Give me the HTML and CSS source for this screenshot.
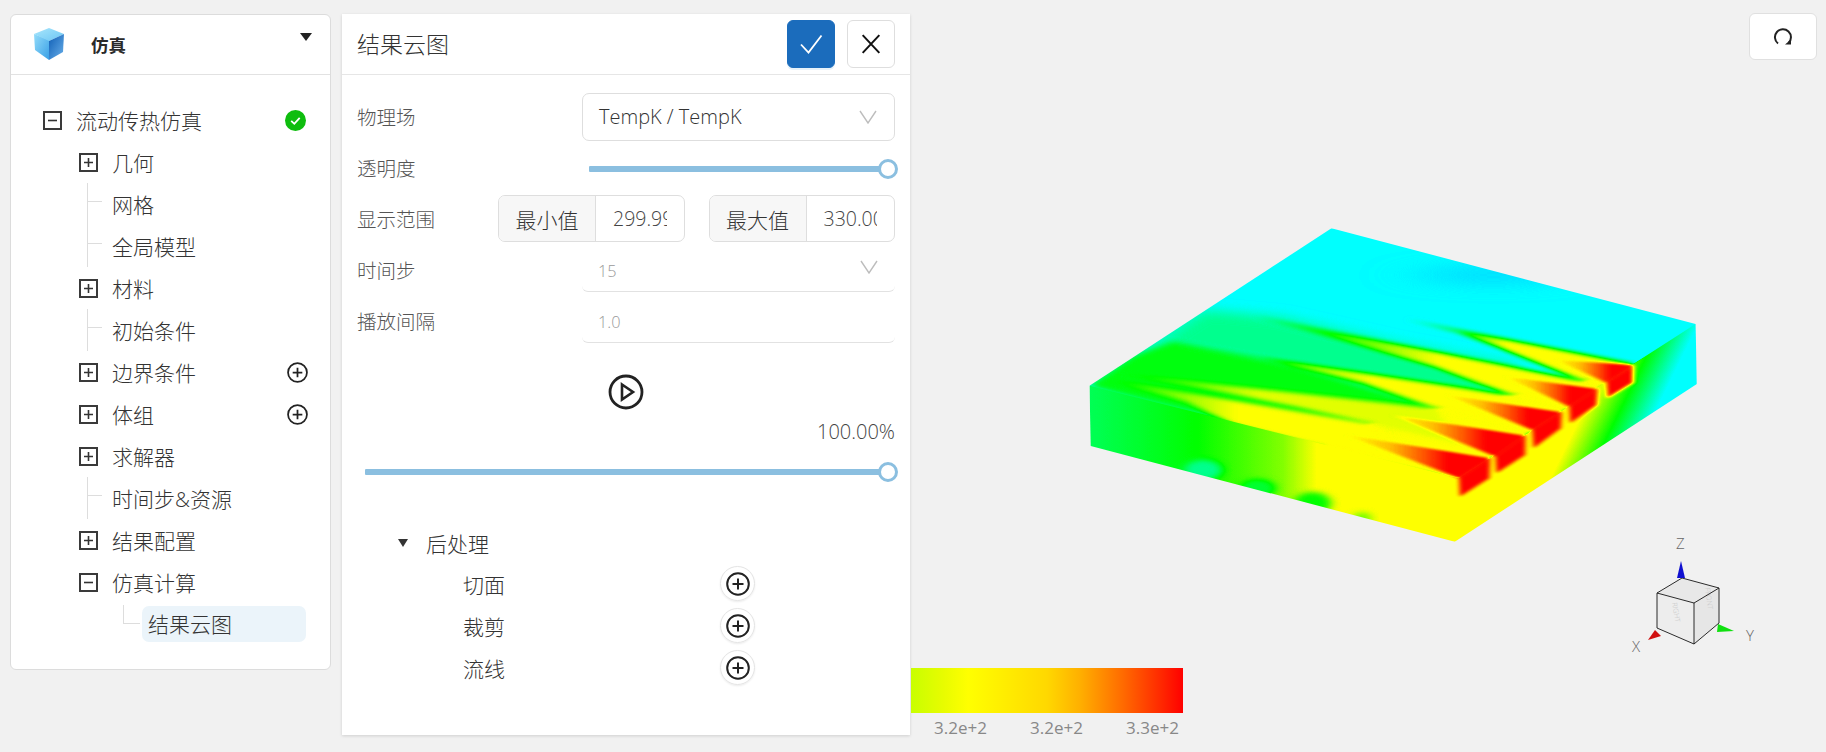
FILE: index.html
```html
<!DOCTYPE html>
<html lang="zh-CN">
<head>
<meta charset="utf-8">
<title>结果云图</title>
<link rel="stylesheet" href="styles.css">
</head>
<body>
<svg class="defs" width="0" height="0" aria-hidden="true">
  <defs>
    <symbol id="i-plus" viewBox="0 0 19 19"><rect x="1" y="1" width="17" height="17" fill="none" stroke="#3a3a3a" stroke-width="2"/><path d="M5 9.500h9M9.500 5v9" stroke="#333" stroke-width="1.600"/></symbol>
    <symbol id="i-minus" viewBox="0 0 19 19"><rect x="1" y="1" width="17" height="17" fill="none" stroke="#3a3a3a" stroke-width="2"/><path d="M5 9.500h9" stroke="#333" stroke-width="1.600"/></symbol>
    <symbol id="i-add" viewBox="0 0 24 24"><circle cx="12" cy="12" r="10.800" fill="none" stroke="#222" stroke-width="2"/><path d="M6.500 12h11M12 6.500v11" stroke="#222" stroke-width="2"/></symbol>
    <symbol id="i-chev" viewBox="0 0 18 14"><path d="M1 1l8 12 8-12" fill="none" stroke="#bdbdbd" stroke-width="1.400"/></symbol>
    <linearGradient id="cubeL" x1="0" y1="0" x2="1" y2="1"><stop offset="0" stop-color="#93dcfa"/><stop offset="1" stop-color="#3aa0e6"/></linearGradient>
    <linearGradient id="cubeT" x1="0" y1="0" x2="1" y2="1"><stop offset="0" stop-color="#a8e6fc"/><stop offset="1" stop-color="#6cc6f4"/></linearGradient>
    <linearGradient id="cubeR" x1="0" y1="0" x2="1" y2="1"><stop offset="0" stop-color="#0f5fb6"/><stop offset="1" stop-color="#6ab0ea"/></linearGradient>

    <linearGradient id="wake1" gradientUnits="userSpaceOnUse" x1="820" y1="0" x2="1060" y2="0"><stop offset="0" stop-color="#616161"/><stop offset=".55" stop-color="#8c8c8c"/><stop offset="1" stop-color="#bfbfbf"/></linearGradient>
    <linearGradient id="wake2" gradientUnits="userSpaceOnUse" x1="440" y1="0" x2="900" y2="0"><stop offset="0" stop-color="#5c5c5c"/><stop offset=".56" stop-color="#949494"/><stop offset="1" stop-color="#bfbfbf"/></linearGradient>
    <linearGradient id="wake3" gradientUnits="userSpaceOnUse" x1="260" y1="0" x2="740" y2="0"><stop offset="0" stop-color="#737373"/><stop offset=".54" stop-color="#9e9e9e"/><stop offset="1" stop-color="#bfbfbf"/></linearGradient>
    <linearGradient id="wake4" gradientUnits="userSpaceOnUse" x1="130" y1="0" x2="470" y2="0"><stop offset="0" stop-color="#7a7a7a"/><stop offset=".5" stop-color="#999"/><stop offset="1" stop-color="#b8b8b8"/></linearGradient>
    <linearGradient id="wake5" gradientUnits="userSpaceOnUse" x1="120" y1="0" x2="420" y2="0"><stop offset="0" stop-color="#808080"/><stop offset=".45" stop-color="#9c9c9c"/><stop offset="1" stop-color="#bfbfbf"/></linearGradient>
    <linearGradient id="flame" x1="0" y1="0" x2="1" y2="0"><stop offset="0" stop-color="#bfbfbf"/><stop offset=".3" stop-color="#cfcfcf"/><stop offset=".55" stop-color="#ebebeb"/><stop offset=".7" stop-color="#fff"/></linearGradient>
    <linearGradient id="leftFace" gradientUnits="userSpaceOnUse" x1="70" y1="0" x2="610" y2="0"><stop offset="0" stop-color="#6a6a6a"/><stop offset=".48" stop-color="#808080"/><stop offset=".85" stop-color="#a0a0a0"/><stop offset="1" stop-color="#bfbfbf"/></linearGradient>
    <linearGradient id="rightFace" gradientUnits="userSpaceOnUse" x1="1225" y1="650" x2="1375" y2="708"><stop offset="0" stop-color="#bfbfbf"/><stop offset=".5" stop-color="#808080"/><stop offset="1" stop-color="#404040"/></linearGradient>

    <filter id="b2" color-interpolation-filters="sRGB" x="-20%" y="-30%" width="140%" height="160%"><feGaussianBlur stdDeviation="6 3"/></filter>
    <filter id="b4" color-interpolation-filters="sRGB" x="-20%" y="-30%" width="140%" height="160%"><feGaussianBlur stdDeviation="8 6"/></filter>
    <filter id="b8" color-interpolation-filters="sRGB" x="-40%" y="-40%" width="180%" height="180%"><feGaussianBlur stdDeviation="11 8"/></filter>
    <filter id="b16" color-interpolation-filters="sRGB" x="-30%" y="-30%" width="160%" height="160%"><feGaussianBlur stdDeviation="24 18"/></filter>
    <filter id="b30" color-interpolation-filters="sRGB" x="-50%" y="-100%" width="200%" height="300%"><feGaussianBlur stdDeviation="60 24"/></filter>
    <filter id="jet" color-interpolation-filters="sRGB" filterUnits="userSpaceOnUse" x="0" y="0" width="1568" height="1050">
      <feComponentTransfer>
        <feFuncR type="table" tableValues="0 0 0 1 1"/>
        <feFuncG type="table" tableValues="0 1 1 1 0"/>
        <feFuncB type="table" tableValues="1 1 0 0 0"/>
      </feComponentTransfer>
    </filter>
    <clipPath id="solid"><polygon points="645,55 1510,342 1513,522 938,995 73,708 70,527"/></clipPath>
  </defs>
</svg>

<main class="app">
  <aside class="nav-panel">
    <header class="nav-head">
      <svg class="logo" viewBox="0 0 32 33">
        <polygon points="0,6 15,12 15,32 1,22" fill="url(#cubeL)"/>
        <polygon points="15,0 30,6 15,13 0,6" fill="url(#cubeT)"/>
        <polygon points="15,13 30,6 29,24 15,32" fill="url(#cubeR)"/>
      </svg>
      <span class="nav-title">仿真</span>
      <span class="nav-caret"></span>
    </header>
    <div class="tree">
      <div class="row root"><svg class="toggle"><use href="#i-minus"/></svg><span>流动传热仿真</span>
        <svg class="status" viewBox="0 0 21 21"><circle cx="10.500" cy="10.500" r="10.500" fill="#0ebd0e"/><path d="M6.200 10.800l3.100 3 5.400-6" fill="none" stroke="#fff" stroke-width="1.800"/></svg></div>
      <div class="row"><svg class="toggle"><use href="#i-plus"/></svg><span>几何</span></div>
      <div class="row leaf"><span>网格</span></div>
      <div class="row leaf"><span>全局模型</span></div>
      <div class="row"><svg class="toggle"><use href="#i-plus"/></svg><span>材料</span></div>
      <div class="row leaf"><span>初始条件</span></div>
      <div class="row"><svg class="toggle"><use href="#i-plus"/></svg><span>边界条件</span><svg class="add"><use href="#i-add"/></svg></div>
      <div class="row"><svg class="toggle"><use href="#i-plus"/></svg><span>体组</span><svg class="add"><use href="#i-add"/></svg></div>
      <div class="row"><svg class="toggle"><use href="#i-plus"/></svg><span>求解器</span></div>
      <div class="row leaf"><span>时间步&amp;资源</span></div>
      <div class="row"><svg class="toggle"><use href="#i-plus"/></svg><span>结果配置</span></div>
      <div class="row"><svg class="toggle"><use href="#i-minus"/></svg><span>仿真计算</span></div>
      <div class="row sub"><span class="selected">结果云图</span></div>
    </div>
  </aside>

  <section class="form-panel">
    <header class="form-head">
      <h1 class="form-title">结果云图</h1>
      <button class="btn primary"><svg viewBox="0 0 24 20"><path d="M2 10.500l7.500 8L22.500 1.500" fill="none" stroke="#fff" stroke-width="1.800"/></svg></button>
      <button class="btn"><svg viewBox="0 0 18 18"><path d="M1.500 1l15 16M16.500 1l-15 16" fill="none" stroke="#111" stroke-width="1.800"/></svg></button>
    </header>
    <div class="form-body">
      <div class="f-row">
        <label class="f-label">物理场</label>
        <div class="select"><span>TempK / TempK</span><svg class="chev"><use href="#i-chev"/></svg></div>
      </div>
      <div class="f-row">
        <label class="f-label">透明度</label>
        <div class="f-grow"><div class="slider"><i class="knob"></i></div></div>
      </div>
      <div class="f-row">
        <label class="f-label short">显示范围</label>
        <div class="range">
          <div class="group"><span class="addon">最小值</span><span class="val"><span>299.99</span></span></div>
          <div class="group"><span class="addon">最大值</span><span class="val"><span>330.00</span></span></div>
        </div>
      </div>
      <div class="f-row">
        <label class="f-label">时间步</label>
        <div class="underline"><span>15</span><svg class="chev up"><use href="#i-chev"/></svg></div>
      </div>
      <div class="f-row">
        <label class="f-label">播放间隔</label>
        <div class="underline"><span>1.0</span></div>
      </div>
      <div class="play">
        <svg viewBox="0 0 36 36"><circle cx="18" cy="18" r="16" fill="none" stroke="#222" stroke-width="2.800"/><path d="M14 10.500l11 7.500-11 7.500z" fill="none" stroke="#222" stroke-width="2.600"/></svg>
      </div>
      <div class="percent">100.00%</div>
      <div class="slider wide"><i class="knob"></i></div>
      <div class="post">
        <div class="post-head"><i class="post-caret"></i><span>后处理</span></div>
        <div class="post-row"><span>切面</span><b class="add-ring"><svg><use href="#i-add"/></svg></b></div>
        <div class="post-row"><span>裁剪</span><b class="add-ring"><svg><use href="#i-add"/></svg></b></div>
        <div class="post-row"><span>流线</span><b class="add-ring"><svg><use href="#i-add"/></svg></b></div>
      </div>
    </div>
  </section>
</main>

<svg class="model" viewBox="0 0 1568 1050" preserveAspectRatio="none">
  <g clip-path="url(#solid)">
    <g filter="url(#jet)">
      <rect width="1568" height="1050" fill="#404040"/>
      <ellipse cx="1030" cy="195" rx="190" ry="30" fill="#383838" filter="url(#b30)"/>
      <polygon points="70,527 340,300 520,320 800,400 1100,470 800,700 300,640" fill="#5c5c5c" filter="url(#b16)"/>
      <polygon points="70,527 170,440 270,395 560,470 900,600 948,805" fill="#7c7c7c" filter="url(#b8)"/>
      <polygon points="1240,512 1362,462 1362,470 948,805 620,710 735,640 890,595 1070,555" fill="#bfbfbf" filter="url(#b2)"/>
      <polygon points="820,328 1362,462 1290,520 1240,512 1040,412 940,365" fill="url(#wake1)" filter="url(#b4)"/>
      <polygon points="460,318 1240,512 1210,590 1070,555 890,470 680,395" fill="url(#wake2)" filter="url(#b4)"/>
      <polygon points="280,405 1070,555 1122,660 890,595 720,520 480,445" fill="url(#wake3)" filter="url(#b4)"/>
      <polygon points="130,490 890,595 948,700 735,640 560,590 300,525" fill="url(#wake4)" filter="url(#b4)"/>
      <polygon points="120,510 735,640 948,805 620,710 420,648 300,575" fill="url(#wake5)" filter="url(#b4)"/>
      <polygon points="0,505 948,805 1100,850 1100,1050 0,1050" fill="url(#leftFace)"/>
      <polygon points="948,805 1362,462 1510,342 1568,294 1568,1050 935,1050" fill="url(#rightFace)"/>
      <ellipse cx="340" cy="780" rx="44" ry="30" fill="#5c5c5c" filter="url(#b8)"/>
      <ellipse cx="470" cy="835" rx="42" ry="28" fill="#737373" filter="url(#b8)"/>
      <ellipse cx="600" cy="880" rx="44" ry="34" fill="#808080" filter="url(#b8)"/>
      <ellipse cx="718" cy="925" rx="22" ry="18" fill="#9c9c9c" filter="url(#b8)"/>
      <g filter="url(#b2)">
        <g fill="url(#flame)">
          <polygon points="680,675 1022,745 948,805"/>
          <polygon points="790,615 1106,677 1035,740"/>
          <polygon points="920,555 1192,607 1122,660"/>
          <polygon points="1060,500 1277,537 1210,590"/>
          <polygon points="1180,450 1362,465 1298,518"/>
        </g>
        <g fill="#fff">
          <polygon points="1022,745 1020,805 950,860 948,805"/>
          <polygon points="1106,677 1105,735 1037,790 1035,740"/>
          <polygon points="1192,607 1190,655 1125,715 1122,660"/>
          <polygon points="1277,537 1275,585 1212,640 1210,590"/>
          <polygon points="1362,465 1362,518 1300,565 1298,518"/>
        </g>
      </g>
    </g>
  </g>
</svg>

<div class="legend">
  <div class="legend-bar"></div>
  <div class="legend-ticks"><span>3.2e+2</span><span>3.2e+2</span><span>3.3e+2</span></div>
</div>

<svg class="axes" viewBox="0 0 180 140">
  <polygon points="57,73 82,58 119,68 94,83" fill="#e8e8e8"/>
  <polygon points="57,73 94,83 94,124 57,108" fill="#ededed"/>
  <polygon points="94,83 119,68 119,103 94,124" fill="#e6e6e6"/>
  <text class="cube-text" transform="translate(72,83) rotate(80)">RIGHT</text>
  <text class="cube-text" transform="translate(105,68) rotate(82)">FRONT</text>
  <path d="M57 73L82 58L119 68L94 83ZM57 73V108L94 124V83M94 124L119 103V68" fill="none" stroke="#151515" stroke-width=".9"/>
  <polygon points="81,41 85,58 77,58" fill="#1010d0"/>
  <polygon points="134,111 118,104 117,112" fill="#10e010"/>
  <polygon points="48,120 55,110 61,116" fill="#d01010"/>
  <text class="axis-text" x="76" y="29">Z</text>
  <text class="axis-text" x="146" y="121">Y</text>
  <text class="axis-text" x="32" y="132">X</text>
</svg>

<button class="reload">
  <svg viewBox="0 0 20 20"><path d="M5 16.500A8 8 0 1 1 15.500 16" fill="none" stroke="#222" stroke-width="2"/><path d="M18 12.500l-6 5h6z" fill="#222"/></svg>
</button>
</body>
</html>
```

FILE: styles.css
```css
* { box-sizing: border-box; }
html, body { margin: 0; height: 100%; }
body {
  position: relative;
  width: 1826px;
  height: 752px;
  overflow: hidden;
  background: #f1f1f1;
  color: #333;
  font-family: "Open Sans", "Noto Sans CJK SC", sans-serif;
  font-size: 19.5px;
  font-weight: 300;
}
.defs { position: absolute; }

.app { display: flex; align-items: flex-start; gap: 11px; padding: 14px 0 0 10px; }

/* left navigation */
.nav-panel {
  width: 321px;
  height: 656px;
  background: #fff;
  border: 1px solid #dcdcdc;
  border-radius: 6px;
}
.nav-head {
  display: flex;
  align-items: center;
  height: 60px;
  padding: 0 18px 0 23px;
  border-bottom: 1px solid #e2e2e2;
}
.logo { width: 32px; height: 33px; }
.nav-title { margin-left: 25px; font-size: 17.5px; font-weight: 700; color: #2a2a2a; }
.nav-caret {
  margin: -16px 0 0 auto;
  border-top: 8px solid #222;
  border-left: 6px solid transparent;
  border-right: 6px solid transparent;
}
.tree { padding: 24px 24px 0 68px; }
.row {
  position: relative;
  display: flex;
  align-items: center;
  gap: 14px;
  height: 42px;
  font-size: 21px;
  color: #333;
}
.row.root { margin-left: -36px; gap: 14px; }
.toggle { width: 19px; height: 19px; flex: none; }
.status { width: 21px; height: 21px; margin-left: auto; }
.add { width: 21px; height: 21px; margin-left: auto; margin-right: -2px; }
.leaf { padding-left: 33px; }
.leaf::before { content: ""; position: absolute; left: 8px; top: 0; bottom: 0; width: 1px; background: #ddd; }
.leaf::after { content: ""; position: absolute; left: 8px; top: 18px; width: 15px; height: 1px; background: #ddd; }
.sub { padding-left: 63px; }
.selected {
  flex: 1;
  height: 36px;
  line-height: 36px;
  padding-left: 6px;
  border-radius: 7px;
  background: #ebf4fa;
}
.sub::before { content: ""; position: absolute; left: 44px; top: 2px; width: 16px; height: 18px; border-left: 1px solid #ddd; border-bottom: 1px solid #ddd; }

/* middle form */
.form-panel {
  width: 568px;
  height: 721px;
  background: #fff;
  box-shadow: 0 1px 3px rgba(0, 0, 0, .14);
}
.form-head {
  display: flex;
  align-items: center;
  gap: 12px;
  height: 61px;
  padding: 0 15px;
  border-bottom: 1px solid #e6e6e6;
}
.form-title { flex: 1; margin: -2px 0 0; font-size: 23px; font-weight: 300; color: #333; }
.btn {
  display: flex;
  align-items: center;
  justify-content: center;
  width: 48px;
  height: 48px;
  padding: 0;
  background: #fff;
  border: 1px solid #dedede;
  border-radius: 6px;
}
.btn svg { width: 20px; height: 20px; }
.btn.primary { background: #1b6cbc; border-color: #1b6cbc; box-shadow: 0 2px 0 #e6f2fa; }
.btn.primary svg { width: 24px; height: 20px; }

.form-body { padding: 16px 15px 0; }
.f-row { display: flex; align-items: center; height: 51px; }
.f-label { flex: 0 0 225px; color: #555; }
.f-label.short { flex-basis: 141px; }
.select {
  flex: 1;
  display: flex;
  align-items: center;
  justify-content: space-between;
  height: 48px;
  padding: 0 17px 0 16px;
  border: 1px solid #dedede;
  border-radius: 7px;
  font-size: 20px;
}
.chev { width: 18px; height: 14px; }
.chev.up { margin-top: -8px; }
.f-grow { flex: 1; padding: 2px 7px 0; }
.slider { position: relative; height: 6px; background: #8bbfe0; border-radius: 1px; }
.knob {
  position: absolute;
  right: -10px;
  top: -7px;
  width: 20px;
  height: 20px;
  background: #fff;
  border: 3.500px solid #8bbfe0;
  border-radius: 50%;
}
.range { flex: 1; min-width: 0; display: flex; gap: 24px; }
.group { flex: 1; min-width: 0; display: flex; height: 47px; border: 1px solid #dedede; border-radius: 7px; overflow: hidden; font-size: 21px; }
.addon {
  flex: 0 0 97px;
  display: flex;
  align-items: center;
  justify-content: center;
  background: #f7f7f7;
  border-right: 1px solid #dedede;
}
.val { flex: 1; display: flex; align-items: center; padding: 0 17px; min-width: 0; color: #444; font-size: 19.5px; }
.val span { overflow: hidden; white-space: nowrap; }
.underline {
  flex: 1;
  display: flex;
  align-items: center;
  justify-content: space-between;
  height: 41px;
  margin-top: 3px;
  padding: 0 17px 0 16px;
  border-bottom: 1px solid #e2e2e2;
  border-radius: 0 0 6px 6px;
  font-size: 16.300px;
  color: #999;
}
.play { display: flex; justify-content: center; margin-top: 28px; height: 36px; padding-right: 1px; }
.play svg { width: 36px; height: 36px; }
.percent { margin-top: 9px; text-align: right; line-height: 26px; font-size: 20px; color: #444; }
.slider.wide { margin: 24px 7px 0 8px; }

.post { margin-top: 47px; padding-left: 41px; }
.post-head { display: flex; align-items: center; gap: 18px; height: 41px; font-size: 21px; }
.post-caret { border-top: 8px solid #333; border-left: 5px solid transparent; border-right: 5px solid transparent; }
.post-row { display: flex; align-items: center; height: 42px; padding-left: 65px; font-size: 21px; }
.post-row span { width: 257px; }
.add-ring {
  display: flex;
  align-items: center;
  justify-content: center;
  width: 35px;
  height: 35px;
  margin-top: -1px;
  border: 1px solid #e4e4e4;
  border-radius: 50%;
  box-shadow: 0 1px 2px rgba(0, 0, 0, .08);
}
.add-ring svg { width: 24px; height: 24px; }

/* 3D viewport: free canvas items */
.model { position: absolute; left: 1060px; top: 210px; width: 660px; height: 350px; }
.legend { position: absolute; left: 911px; top: 668px; width: 272px; }
.legend-bar {
  height: 45px;
  background: linear-gradient(90deg, #c8ff00 0%, #e8fc00 12%, #ffff00 21%, #ffd800 50%, #ffb000 62%, #ff6a00 78%, #ff2800 92%, #ff0000 100%);
}
.legend-ticks { display: flex; justify-content: space-between; padding: 4px 4px 0 23px; font-size: 17px; line-height: 22px; color: #888; font-weight: 400; }
.axes { position: absolute; left: 1600px; top: 520px; width: 180px; height: 140px; }
.axis-text { font-size: 15px; fill: #666; font-family: "Open Sans", sans-serif; }
.cube-text { font-size: 7px; fill: #c4c4c4; font-family: "Open Sans", sans-serif; }
.reload {
  position: absolute;
  left: 1749px;
  top: 13px;
  display: flex;
  align-items: center;
  justify-content: center;
  width: 68px;
  height: 47px;
  padding: 0;
  background: #fff;
  border: 1px solid #e0e0e0;
  border-radius: 6px;
}
.reload svg { width: 20px; height: 20px; }
```
